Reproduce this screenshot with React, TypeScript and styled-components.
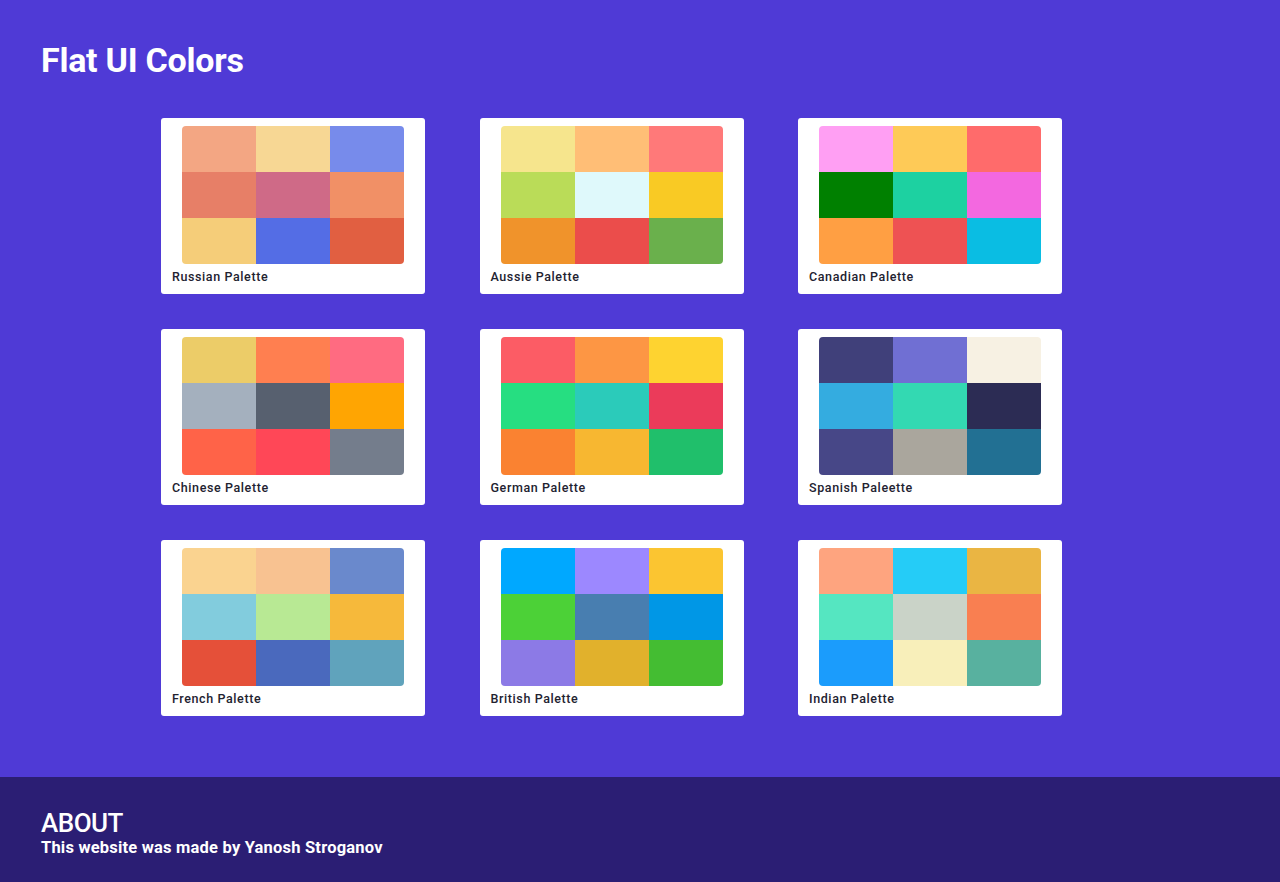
import React from "react";
import styled, { createGlobalStyle } from "styled-components";

const Global = createGlobalStyle`
  html, body { margin: 0; padding: 0; }
  body {
    background: #4f3ad6;
    font-family: Roboto, "Liberation Sans", Arial, sans-serif;
  }
`;

const Page = styled.div`
  min-height: 882px;
  display: flex;
  flex-direction: column;
  background: #4f3ad6;
`;

const Header = styled.header`
  padding: 40px 41px 0;
  height: 78px;
  box-sizing: border-box;
`;

const Title = styled.h1`
  margin: 0;
  color: #ffffff;
  font-family: Roboto, "Liberation Sans", sans-serif;
  font-weight: 700;
  font-size: 34px;
  line-height: 40px;
  letter-spacing: -0.25px;
`;

const Main = styled.main`
  flex: 1;
  padding: 40px 0 61px 161px;
`;

const Grid = styled.div`
  display: grid;
  grid-template-columns: repeat(3, 264px);
  column-gap: 54.5px;
  row-gap: 35px;
`;

const Card = styled.div`
  width: 264px;
  height: 176px;
  box-sizing: border-box;
  background: #ffffff;
  border-radius: 3px;
  padding-top: 8px;
  display: flex;
  flex-direction: column;
`;

const Swatches = styled.div`
  width: 222px;
  height: 138px;
  margin: 0 auto;
  display: grid;
  grid-template-columns: repeat(3, 1fr);
  grid-template-rows: repeat(3, 1fr);
  border-radius: 4px;
  overflow: hidden;
`;

const Swatch = styled.div<{ $c: string }>`
  background: ${(p) => p.$c};
`;

const Label = styled.div`
  padding: 6px 0 0 11px;
  font-family: Roboto, "Liberation Sans", sans-serif;
  font-size: 12.5px;
  font-weight: 500;
  letter-spacing: 0.6px;
  color: #222230;
  line-height: 14px;
`;

const Footer = styled.footer`
  background: #2b1e74;
  height: 105px;
  box-sizing: border-box;
  padding: 31px 41px 0;
  color: #ffffff;
`;

const FooterTitle = styled.h2`
  margin: 0;
  font-family: Roboto, "Liberation Sans", sans-serif;
  font-size: 26px;
  font-weight: 500;
  line-height: 30px;
  letter-spacing: -0.5px;
`;

const FooterText = styled.p`
  margin: 0;
  font-family: Roboto, "Liberation Sans", sans-serif;
  font-size: 16.5px;
  font-weight: 700;
  line-height: 20px;
  letter-spacing: 0.2px;
`;

const palettes: { name: string; colors: string[] }[] = [
  { name: "Russian Palette", colors: ["#f3a683", "#f7d794", "#778beb", "#e77f67", "#cf6a87", "#f19066", "#f5cd79", "#546de5", "#e15f41"] },
  { name: "Aussie Palette", colors: ["#f6e58d", "#ffbe76", "#ff7979", "#badc58", "#dff9fb", "#f9ca24", "#f0932b", "#eb4d4b", "#6ab04c"] },
  { name: "Canadian Palette", colors: ["#ff9ff3", "#feca57", "#ff6b6b", "#008000", "#1dd1a1", "#f368e0", "#ff9f43", "#ee5253", "#0abde3"] },
  { name: "Chinese Palette", colors: ["#eccc68", "#ff7f50", "#ff6b81", "#a4b0be", "#57606f", "#ffa502", "#ff6348", "#ff4757", "#747d8c"] },
  { name: "German Palette", colors: ["#fc5c65", "#fd9644", "#fed330", "#26de81", "#2bcbba", "#eb3b5a", "#fa8231", "#f7b731", "#20bf6b"] },
  { name: "Spanish Paleette", colors: ["#40407a", "#706fd3", "#f7f1e3", "#34ace0", "#33d9b2", "#2c2c54", "#474787", "#aaa69d", "#227093"] },
  { name: "French Palette", colors: ["#fad390", "#f8c291", "#6a89cc", "#82ccdd", "#b8e994", "#f6b93b", "#e55039", "#4a69bd", "#60a3bc"] },
  { name: "British Palette", colors: ["#00a8ff", "#9c88ff", "#fbc531", "#4cd137", "#487eb0", "#0097e6", "#8c7ae6", "#e1b12c", "#44bd32"] },
  { name: "Indian Palette", colors: ["#fea47f", "#25ccf7", "#eab543", "#55e6c1", "#cad3c8", "#f97f51", "#1b9cfc", "#f8efba", "#58b19f"] },
];

export default function App() {
  return (
    <Page>
      <Global />
      <Header>
        <Title>Flat UI Colors</Title>
      </Header>
      <Main>
        <Grid>
          {palettes.map((p) => (
            <Card key={p.name}>
              <Swatches>
                {p.colors.map((c, i) => (
                  <Swatch key={i} $c={c} />
                ))}
              </Swatches>
              <Label>{p.name}</Label>
            </Card>
          ))}
        </Grid>
      </Main>
      <Footer>
        <FooterTitle>ABOUT</FooterTitle>
        <FooterText>This website was made by Yanosh Stroganov</FooterText>
      </Footer>
    </Page>
  );
}
